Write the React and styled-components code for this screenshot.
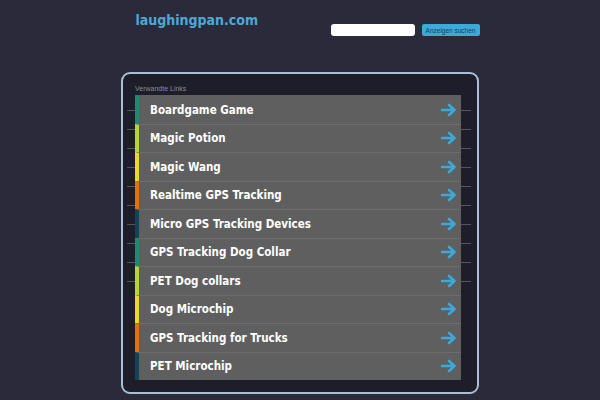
import React from "react";
import styled, { createGlobalStyle } from "styled-components";

const Global = createGlobalStyle`
  html, body {
    margin: 0;
    padding: 0;
    background: #2b2a3a;
    font-family: "DejaVu Sans", Verdana, sans-serif;
  }
`;

const Page = styled.div`
  width: 600px;
  height: 400px;
  overflow: hidden;
  display: flex;
  flex-direction: column;
  align-items: center;
`;

const Header = styled.header`
  width: 344px;
  height: 72px;
  display: flex;
  justify-content: space-between;
  align-items: flex-start;
  padding: 0 0 0 15px;
`;

const Logo = styled.a`
  margin-top: 12px;
  font-size: 14px;
  font-weight: bold;
  font-family: "DejaVu Sans Condensed", "DejaVu Sans", sans-serif;
  color: #4aa9d9;
  text-decoration: none;
`;

const Search = styled.form`
  margin-top: 24px;
  display: flex;
  gap: 7px;
`;

const Input = styled.input`
  width: 84px;
  height: 12px;
  border: none;
  border-radius: 3px;
  background: #fff;
  padding: 0;
`;

const Button = styled.button`
  height: 12px;
  width: 58px;
  border: none;
  border-radius: 2px;
  background: #3ba9da;
  color: #1c3d55;
  font-family: "Liberation Sans", Arial, sans-serif;
  font-size: 6.5px;
  padding: 0;
  white-space: nowrap;
`;

const Panel = styled.section`
  width: 354px;
  height: 318px;
  border: 2px solid #a9bfd6;
  border-radius: 9px;
  background: #1e1d2a;
  box-sizing: content-box;
  padding: 0;
`;

const Caption = styled.div`
  font-family: "Liberation Sans", Arial, sans-serif;
  font-size: 7px;
  color: #8b8b94;
  padding: 11px 0 0 12px;
  height: 10px;
`;

const Rails = styled.div`
  margin: 0 6px 0 4px;
  padding: 0 10px 0 8px;
  background-image: repeating-linear-gradient(
    to bottom,
    transparent 0,
    transparent 15px,
    #55555d 15px,
    #55555d 16px,
    transparent 16px,
    transparent 19px
  );
  background-size: 100% 190px;
  background-repeat: no-repeat;
`;

const List = styled.ul`
  list-style: none;
  margin: 0;
  padding: 0;
`;

const Row = styled.li`
  height: 28.5px;
  box-sizing: border-box;
  display: flex;
  align-items: center;
  background: #5f5f5f;
  border-left: 4px solid ${(p) => p.$accent};
  border-top: 1px solid ${(p) => (p.$first ? "#5f5f5f" : "#6c6c6c")};
  padding: 0 4px 0 11px;
  color: #fff;
  font-weight: bold;
  font-family: "DejaVu Sans Condensed", "DejaVu Sans", sans-serif;
  font-size: 11.5px;
`;

const Label = styled.span`
  flex: 1;
`;

const Arrow = styled.svg`
  width: 16px;
  height: 14px;
`;

const links = [
  ["Boardgame Game", "#25876f"],
  ["Magic Potion", "#b7d43b"],
  ["Magic Wang", "#e9d72a"],
  ["Realtime GPS Tracking", "#e07215"],
  ["Micro GPS Tracking Devices", "#0f4557"],
  ["GPS Tracking Dog Collar", "#25876f"],
  ["PET Dog collars", "#b7d43b"],
  ["Dog Microchip", "#e9d72a"],
  ["GPS Tracking for Trucks", "#e07215"],
  ["PET Microchip", "#0f4557"],
];

export default () => {
  return (
    <>
      <Global />
      <Page>
        <Header>
          <Logo href="#">laughingpan.com</Logo>
          <Search onSubmit={(e) => e.preventDefault()}>
            <Input type="text" />
            <Button type="submit">Anzeigen suchen</Button>
          </Search>
        </Header>
        <Panel>
          <Caption>Verwandte Links</Caption>
          <Rails>
            <List>
              {links.map(([label, accent], i) => (
                <Row key={label} $accent={accent} $first={i === 0}>
                  <Label>{label}</Label>
                  <Arrow viewBox="0 0 16 14">
                    <path
                      d="M1 7 H13 M8 2 L13.5 7 L8 12"
                      fill="none"
                      stroke="#3ba9da"
                      strokeWidth="2.6"
                      strokeLinecap="round"
                      strokeLinejoin="round"
                    />
                  </Arrow>
                </Row>
              ))}
            </List>
          </Rails>
        </Panel>
      </Page>
    </>
  );
};
